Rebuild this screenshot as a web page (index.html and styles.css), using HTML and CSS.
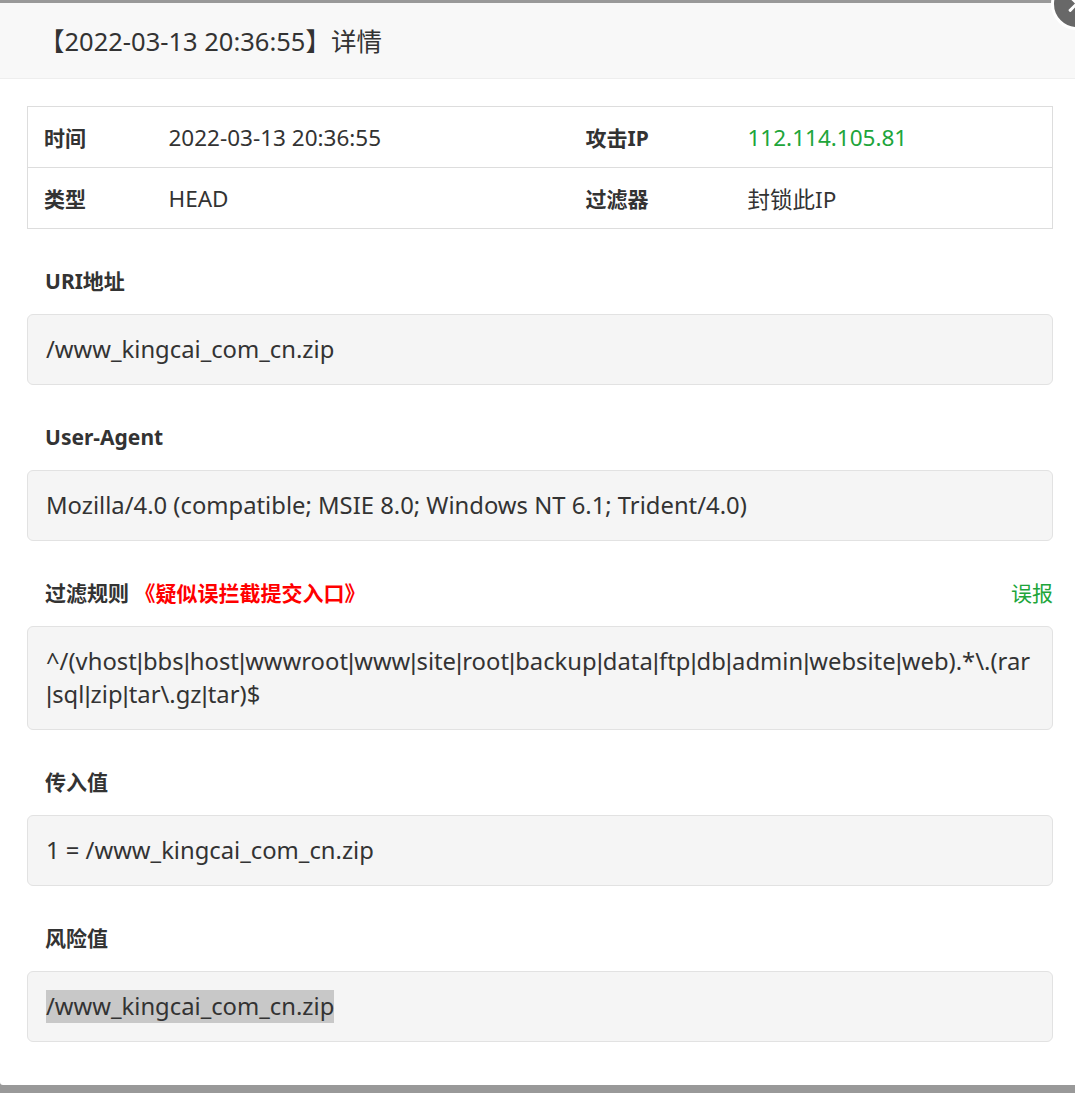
FILE: index.html
```html
<!DOCTYPE html>
<html lang="zh-CN">
<head>
<meta charset="utf-8">
<title>详情</title>
<link rel="stylesheet" href="styles.css">
</head>
<body>
<div class="modal">
  <div class="modal-header">【2022-03-13 20:36:55】详情</div>
  <span class="close-btn"><span class="close-x"></span></span>
  <div class="modal-body">
    <table class="info-table">
      <colgroup>
        <col class="c1"><col class="c2"><col class="c3"><col class="c4">
      </colgroup>
      <tr>
        <th>时间</th><td>2022-03-13 20:36:55</td>
        <th>攻击IP</th><td class="green">112.114.105.81</td>
      </tr>
      <tr>
        <th>类型</th><td>HEAD</td>
        <th>过滤器</th><td>封锁此IP</td>
      </tr>
    </table>

    <div class="section-title">URI地址</div>
    <div class="code-box">/www_kingcai_com_cn.zip</div>

    <div class="section-title">User-Agent</div>
    <div class="code-box">Mozilla/4.0 (compatible; MSIE 8.0; Windows NT 6.1; Trident/4.0)</div>

    <div class="section-title row-between">
      <span>过滤规则 <span class="red">《疑似误拦截提交入口》</span></span>
      <a class="report">误报</a>
    </div>
    <div class="code-box break">^/(vhost<span class="pipe">|</span>bbs<span class="pipe">|</span>host<span class="pipe">|</span>wwwroot<span class="pipe">|</span>www<span class="pipe">|</span>site<span class="pipe">|</span>root<span class="pipe">|</span>backup<span class="pipe">|</span>data<span class="pipe">|</span>ftp<span class="pipe">|</span>db<span class="pipe">|</span>admin<span class="pipe">|</span>website<span class="pipe">|</span>web).*\.(rar<span class="pipe">|</span>sql<span class="pipe">|</span>zip<span class="pipe">|</span>tar\.gz<span class="pipe">|</span>tar)$</div>

    <div class="section-title">传入值</div>
    <div class="code-box">1 = /www_kingcai_com_cn.zip</div>

    <div class="section-title">风险值</div>
    <div class="code-box"><span class="selected">/www_kingcai_com_cn.zip</span></div>
  </div>
</div>
</body>
</html>
```

FILE: styles.css
```css
html, body {
  margin: 0;
  padding: 0;
}
body {
  background: #999999;
  overflow: hidden;
  font-family: "Noto Sans", "Noto Sans CJK SC", sans-serif;
  color: #333333;
}
.modal {
  position: relative;
  margin-top: 3px;
  height: 1082px;
  background: #ffffff;
  border-bottom-left-radius: 3px;
}
.modal-header {
  height: 75px;
  line-height: 77px;
  background: #f8f8f8;
  border-bottom: 1px solid #eeeeee;
  padding-left: 39px;
  font-size: 25.5px;
  color: #333333;
}
.close-btn {
  position: absolute;
  left: 1051px;
  top: -25px;
  width: 46px;
  height: 46px;
  border-radius: 50%;
  background: #686868;
  border: 3px solid #ffffff;
}
.close-x::before,
.close-x::after {
  content: "";
  position: absolute;
  left: 12px;
  top: 21px;
  width: 22px;
  height: 3px;
  background: #ffffff;
  border-radius: 1px;
}
.close-x::before { transform: rotate(45deg); }
.close-x::after { transform: rotate(-45deg); }

.modal-body {
  padding: 27px 22px 0 27px;
}
.info-table {
  width: 100%;
  border-collapse: collapse;
  table-layout: fixed;
  border: 1px solid #dddddd;
  font-size: 21px;
}
.c1 { width: 125px; }
.c2 { width: 417px; }
.c3 { width: 162px; }
.c4 { width: auto; }
.info-table tr + tr th,
.info-table tr + tr td {
  border-top: 1px solid #dddddd;
}
.info-table th,
.info-table td {
  height: 60px;
  padding: 0 16px;
  text-align: left;
  vertical-align: middle;
}
.info-table th {
  font-weight: bold;
}
.info-table td {
  font-weight: normal;
  font-size: 22.5px;
}
.green {
  color: #20a53a;
}
.section-title {
  margin-top: 32px;
  line-height: 40px;
  height: 40px;
  padding-left: 18px;
  font-size: 21px;
  font-weight: bold;
}
.row-between {
  display: flex;
  justify-content: space-between;
}
.red {
  color: #ff0000;
}
.report {
  color: #20a53a;
  font-weight: normal;
  cursor: pointer;
}
.code-box {
  margin-top: 13px;
  padding: 18px;
  border: 1px solid #e2e2e2;
  border-radius: 6px;
  background: #f5f5f5;
  font-size: 23.8px;
  line-height: 33px;
  color: #333333;
}
.break {
  word-break: break-all;
}
.pipe {
  font-family: "Liberation Sans", sans-serif;
}
.selected {
  display: inline-block;
  background: #c8c8c8;
}
```
